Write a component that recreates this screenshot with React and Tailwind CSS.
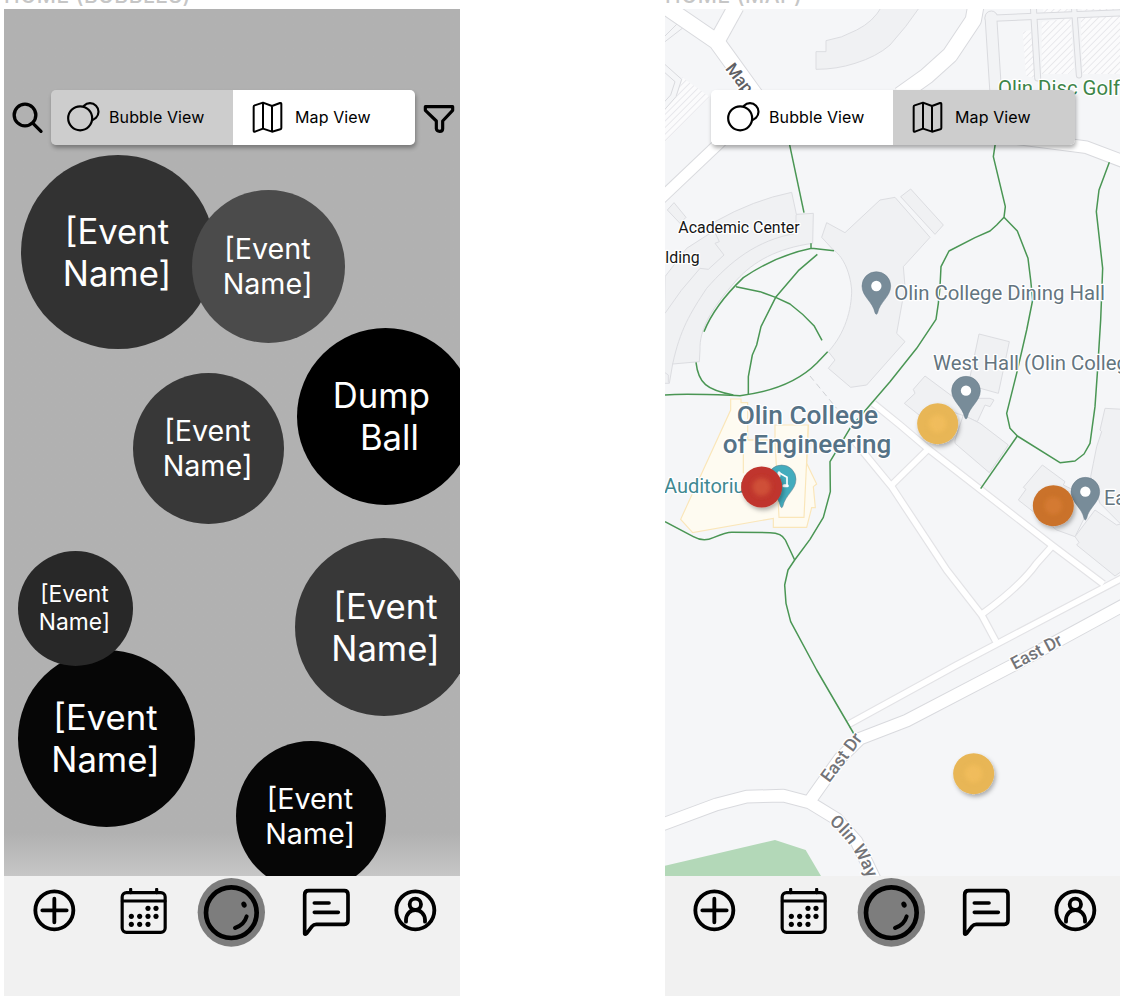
import React from "react";

function BubblesIcon({ fill }) {
  return (
    <svg className="h-8 w-[34px]" viewBox="199 305 102 96" fill="none" stroke="black" strokeWidth="6.5">
      <circle cx="271" cy="337" r="25.5" />
      <circle cx="241.5" cy="357" r="36" className={fill} />
    </svg>
  );
}

function FoldedMapIcon() {
  return (
    <svg className="h-8 w-[31px]" viewBox="757 304 93 96" fill="none" stroke="black" strokeWidth="6" strokeLinejoin="round">
      <path d="M762 321Q762 318 765 317L790 309L817 319L841 310Q845 309 845 313V385Q845 388 842 389L817 396L790 387L766 396Q762 397 762 393ZM790 309V387M817 319V396" />
    </svg>
  );
}

function Toggle({ active, className = "" }) {
  const bubble = active === "bubble";
  return (
    <div className={`flex h-[55px] w-[364px] rounded-[5px] shadow-[1px_3px_4px_rgba(0,0,0,0.32)] ${className}`}>
      <div className={`flex w-1/2 items-center rounded-l-[5px] pb-px pl-[15px] ${bubble ? "bg-[#cdcdcd]" : "bg-white"}`}>
        <BubblesIcon fill={bubble ? "fill-[#cdcdcd]" : "fill-white"} />
        <span className="ml-[9px] whitespace-nowrap text-[16px] tracking-[0.1px]">Bubble View</span>
      </div>
      <div className={`flex w-1/2 items-center rounded-r-[5px] pb-px pl-[19px] ${bubble ? "bg-white" : "bg-[#cdcdcd]"}`}>
        <FoldedMapIcon />
        <span className="ml-3 whitespace-nowrap text-[16px] tracking-[0.1px]">Map View</span>
      </div>
    </div>
  );
}

function NavBar({ className = "" }) {
  return (
    <nav className={`flex h-[120px] w-[456px] shrink-0 items-start bg-[#f1f1f1] ${className}`}>
      <svg className="ml-[29px] mt-[13px] h-[43px] w-[43px] shrink-0" viewBox="99 207 129 129" fill="none" stroke="black" strokeWidth="11.5" strokeLinecap="round">
        <circle cx="163" cy="271" r="57" />
        <path d="M127 271H200M163 236V307" />
      </svg>
      <svg className="ml-[44px] mt-[12px] h-[47px] w-[47px] shrink-0" viewBox="361 204 141 141" fill="none" stroke="black" strokeWidth="9.5" strokeLinecap="round">
        <rect x="367.5" y="218" width="129" height="119" rx="13" />
        <path d="M368 243H496M393 208V218M471 208V218" />
        <g fill="black" stroke="none">
          {[[445, 265], [469, 265], [395, 289], [420, 289], [445, 289], [469, 289], [395, 313], [420, 313], [445, 313]].map(([x, y]) => (
            <circle key={`${x}-${y}`} cx={x} cy={y} r="7.7" />
          ))}
        </g>
      </svg>
      <svg className="ml-[30px] mt-[2px] h-[69px] w-[68px] shrink-0" viewBox="592 174 204 207" fill="none">
        <ellipse cx="695" cy="277" rx="101" ry="103" fill="#7d7d7d" />
        <circle cx="695" cy="278" r="76" stroke="black" strokeWidth="14" />
        <ellipse cx="733" cy="254" rx="7.5" ry="9.5" fill="black" transform="rotate(-25 733 254)" />
        <path d="M741 289Q734 315 706 324" stroke="black" strokeWidth="12" strokeLinecap="round" />
      </svg>
      <svg className="ml-[37px] mt-[12px] h-[49px] w-[49px] shrink-0" viewBox="909 204 147 147" fill="none" stroke="black" strokeWidth="11" strokeLinecap="round" strokeLinejoin="round">
        <path d="M917 340V224Q917 212 929 212H1036Q1047 212 1047 224V301Q1047 313 1036 313H952Q944 313 939 319L923 340Q917 345 917 340Z" />
        <path d="M946 249H990M946 277H1018" />
      </svg>
      <svg className="ml-[43px] mt-[13px] h-[43px] w-[43px] shrink-0" viewBox="1181 206 129 129" fill="none" stroke="black" strokeWidth="11.5" strokeLinecap="round">
        <circle cx="1245" cy="270" r="57" />
        <circle cx="1245" cy="252" r="17" />
        <path d="M1217 304V298C1218 280 1230 269 1245 269S1273 280 1274 298V304" />
      </svg>
    </nav>
  );
}

const bubbles = [
  { pos: "left-[17px] top-[146px] size-[194px] bg-[#323232] text-[34.7px] leading-[42px]", lines: ["[Event", "Name]"] },
  { pos: "left-[188px] top-[181px] size-[153px] bg-[#4b4b4b] pb-px text-[28.7px] leading-[35px]", lines: ["[Event", "Name]"] },
  { pos: "left-[293px] top-[319px] size-[177px] bg-black pb-px text-[34.7px] leading-[42px]", lines: ["Dump\u2009", " Ball"] },
  { pos: "left-[129px] top-[364px] size-[151px] bg-[#383838] pb-px text-[28.7px] leading-[35px]", lines: ["[Event", "Name]"] },
  { pos: "left-[14px] top-[641px] size-[177px] bg-[#060606] pb-[2px] text-[34.7px] leading-[42px]", lines: ["[Event", "Name]"] },
  { pos: "left-[14px] top-[542px] size-[115px] bg-[#282828] pb-[2px] text-[22.8px] leading-[28px]", lines: ["[Event", "Name]"] },
  { pos: "left-[291px] top-[529px] size-[178px] bg-[#383838] pl-[5px] text-[34.7px] leading-[42px]", lines: ["[Event", "Name]"] },
  { pos: "left-[232px] top-[732px] size-[150px] bg-[#060606] pb-px text-[28.7px] leading-[35px]", lines: ["[Event", "Name]"] },
];

function BubbleCanvas() {
  return (
    <div className="absolute inset-0">
      {bubbles.map((b, i) => (
        <div key={i} className={`absolute flex flex-col items-center justify-center rounded-full pr-[2px] text-white ${b.pos}`}>
          {b.lines.map((line) => (
            <span key={line} className="whitespace-pre">{line}</span>
          ))}
        </div>
      ))}
    </div>
  );
}

function Pin({ x, y, color = "#788c99", hole = true }) {
  return (
    <g transform={`translate(${x} ${y})`}>
      <path d="M0 -43A43 43 0 0 1 43 0C43 32 10 48 4 80Q0 90 -4 80C-10 48 -43 32 -43 0A43 43 0 0 1 0 -43Z" fill={color} stroke="#667b88" strokeWidth="1.5" />
      {hole && <circle r="15.5" fill="white" />}
    </g>
  );
}

function Dot({ x, y, outer, inner }) {
  return (
    <g filter="url(#dotShadow)">
      <circle cx={x} cy={y} r="61.5" fill={outer} />
      <circle cx={x} cy={y} r="27" fill={inner} filter="url(#soft)" />
    </g>
  );
}

const roads = [
  ["M-20 -5L170 125L300 305", 46],
  ["M170 125L228 20", 46],
  ["M-20 617L190 418", 31],
  ["M948 15L940 60L870 165L800 228L720 285", 46],
  ["M1000 405L1280 442L1400 488", 35],
  ["M1410 1805L1060 1995L740 2162L600 2216L540 2275L450 2402", 35],
  ["M-10 2480L170 2413L260 2390L370 2387L450 2408L530 2457L590 2525L655 2660", 35],
];

const lanes = [
  "M640 1210L720 1275L805 1347L1175 1635L1330 1752",
  "M580 1320L695 1460L860 1710L965 1845L1008 1925",
  "M805 1347L695 1455",
  "M1175 1640L1130 1690Q1080 1760 965 1843",
  "M562 2175L890 1995L1010 1932L1400 1727",
];

const buildings = [
  "M665 20Q640 65 590 90Q545 115 498 122V155H468V208Q530 208 585 190Q650 170 690 135Q740 80 780 20Z",
  "M22 630L42 608L78 652L60 670Z",
  "M15 830L80 745L150 700L165 665Q280 600 395 577L410 647L408 700L200 805L38 1092L28 1150H10Z",
  "M38 1092C60 990 90 940 140 865C210 785 290 720 408 700V647L410 643L460 640L458 730C350 745 280 785 230 840C150 930 118 990 120 1050L118 1085Z",
  "M485 712L500 668L555 698L660 600L705 592L810 712L730 800L735 860L710 1000L735 1025L620 1155L572 1162L505 1105L525 1080L505 1055C555 1000 575 930 575 870C570 810 545 765 520 750Z",
  "M722 590L752 567L850 675L825 703Z",
  "M957 1002L1048 1025L1015 1180L925 1155Z",
  "M733 1210L765 1180L760 1168L795 1128L885 1195L990 1195L1002 1200L990 1220L975 1215L952 1265L905 1245L860 1230L815 1275Z",
  "M885 1320L910 1245L960 1270L1045 1335L988 1418L885 1330Z",
  "M1147 1395L1215 1445L1210 1455L1300 1500L1245 1610L1190 1590L1075 1500L1098 1468L1090 1462Z",
  "M1390 1228L1335 1225L1320 1290L1325 1295L1310 1340L1300 1390L1292 1430L1320 1510L1390 1580Z",
  "M1245 1610L1305 1530L1370 1575L1390 1570V1710L1365 1728L1250 1635L1257 1627Z",
];

const trails = [
  "M388 430L432 638",
  "M1006 430L1000 470L1036 620L1032 652L1010 675L990 693L945 713L867 753L843 800L840 860L835 910L828 958L770 1045L690 1145L570 1285L510 1385L511 1475L490 1552L450 1618L404 1680L384 1710L374 1755L378 1810L392 1865L470 2010L582 2202",
  "M1032 652L1072 693L1104 775L1112 840L1118 900L1100 990L1070 1120L1040 1240L1050 1285L1072 1308L1200 1388L1245 1383L1272 1362L1290 1330L1305 1220L1312 1120L1322 960L1328 805L1309 635L1317 570L1348 487",
  "M1072 1308L962 1466",
  "M15 1185C80 1180 180 1185 240 1187C340 1175 420 1140 470 1090L503 1055",
  "M108 1087C115 1150 140 1170 220 1185",
  "M132 995C150 950 180 900 250 833C320 785 380 760 455 745L522 752M453 730V745",
  "M472 763L415 812L347 892L303 980L290 1035L277 1065L265 1130V1185",
  "M228 860L300 875L347 892L390 912Q430 942 462 977L486 1021",
  "M15 1565L100 1610Q130 1627 160 1613Q200 1597 215 1597L330 1598Q365 1598 376 1620L404 1680",
];

function Label({ x, y, size, len, color, weight = 400, rotate = 0, children }) {
  return (
    <text
      transform={`translate(${x} ${y}) rotate(${rotate})`}
      fontSize={size}
      fontWeight={weight}
      fill={color}
      textLength={len}
      lengthAdjust="spacingAndGlyphs"
      stroke="white"
      strokeWidth="8"
      strokeLinejoin="round"
      paintOrder="stroke"
    >
      {children}
    </text>
  );
}

function CampusMap() {
  return (
    <svg className="absolute inset-0 h-full w-full font-['Roboto',sans-serif]" viewBox="15 27 1365 2601" preserveAspectRatio="none" fill="none">
      <defs>
        <pattern id="hatch" width="14" height="14" patternUnits="userSpaceOnUse" patternTransform="rotate(45)">
          <rect width="14" height="14" fill="#fbfbfc" />
          <path d="M0 0V14" stroke="#dfe0e4" strokeWidth="4" />
        </pattern>
        <filter id="dotShadow" x="-30%" y="-30%" width="160%" height="160%">
          <feDropShadow dx="5" dy="8" stdDeviation="6" floodOpacity="0.3" />
        </filter>
        <filter id="soft" x="-50%" y="-50%" width="200%" height="200%" colorInterpolationFilters="sRGB">
          <feGaussianBlur stdDeviation="6" />
        </filter>
        <path id="olinWay" d="M506 2468Q554 2508 584 2558Q609 2598 643 2688" />
      </defs>
      <rect x="15" y="27" width="1365" height="2601" fill="#f5f6f8" />
      <path d="M15 195L148 290L15 425Z" fill="url(#hatch)" />
      <path d="M0 160L68 235L50 290L0 345Z" fill="#f5f6f8" />
      <path d="M0 180L65 238L48 290L0 345M0 205L45 245L32 285L0 320M15 108L55 68M15 125L68 84" stroke="#d9dade" strokeWidth="3" />
      <path d="M1088 95L1112 90L1128 235L1098 228ZM1145 65L1232 55L1242 205L1225 222H1145ZM1262 55L1380 45V222H1268ZM1150 20H1225V35L1150 40ZM1265 20H1380V32H1265Z" fill="url(#hatch)" />
      <g strokeLinecap="round">
        <g stroke="#d9dade">
          <path d="M993 55L1010 320" strokeWidth="38" />
          <path d="M985 55L1400 38" strokeWidth="22" />
          <path d="M1120 20L1133 234" strokeWidth="21" />
          <path d="M1242 20L1257 226" strokeWidth="19" />
          <circle cx="994" cy="52" r="19" fill="#f2f3f5" strokeWidth="3" />
        </g>
        <g stroke="#f2f3f5">
          <path d="M993 55L1010 320" strokeWidth="32" />
          <path d="M985 55L1400 38" strokeWidth="16" />
          <path d="M1120 20L1133 234" strokeWidth="15" />
          <path d="M1242 20L1257 226" strokeWidth="13" />
        </g>
      </g>
      <g fill="#f0f1f3" stroke="#dcdde1" strokeWidth="3" strokeLinejoin="round">
        {buildings.map((d) => <path key={d} d={d} />)}
        <path d="M120 805L145 808L192 765L165 730L178 725L165 698M15 940Q60 870 120 805M15 1118L25 1125V1148" fill="none" />
      </g>
      <g fill="#fefbf1" stroke="#fae6b9" strokeWidth="3.5">
        <path d="M212 1197H243V1208H263V1320H345V1275H445L440 1390L470 1452L460 1460L466 1523H455L440 1582H340V1555L98 1598L62 1558L212 1230Z" />
        <path d="M250 1320L250 1420M345 1320L357 1552H432L445 1275M265 1320H345" fill="none" />
      </g>
      <g strokeLinejoin="round">
        {lanes.map((d) => <path key={d} d={d} stroke="#e3e3e6" strokeWidth="24" />)}
        {roads.map(([d, w]) => <path key={d} d={d} stroke="#d9dade" strokeWidth={w + 6} />)}
        {lanes.map((d) => <path key={d} d={d} stroke="white" strokeWidth="17" />)}
        {roads.map(([d, w]) => <path key={d} d={d} stroke="white" strokeWidth={w} />)}
      </g>
      <path d="M15 2597L345 2520L437 2550L490 2640H15Z" fill="#b3d8b8" />
      <path d="M450 1128L530 1225" stroke="#cfd1d5" strokeWidth="3" strokeDasharray="18 12" />
      <g stroke="#4a9654" strokeWidth="4.5" strokeLinejoin="round">
        {trails.map((d) => <path key={d} d={d} />)}
      </g>

      <Pin x={649} y={858} />
      <Pin x={918} y={1172} />
      <Pin x={1276} y={1475} />
      <Pin x={365} y={1438} color="#43acbd" hole={false} />
      <path d="M357 1418L381 1432V1458" stroke="white" strokeWidth="5" />
      <path d="M357 1418V1428M372 1457H382" stroke="white" strokeWidth="9" strokeLinecap="round" />

      <Label x={55} y={698} size={48} len={364} color="#151515">Academic Center</Label>
      <Label x={16} y={788} size={48} len={103} color="#151515">lding</Label>
      <Label x={703} y={900} size={62} len={632} color="#64757f">Olin College Dining Hall</Label>
      <Label x={819} y={1109} size={61} len={617} color="#64757f">West Hall (Olin College</Label>
      <Label x={1332} y={1515} size={60} color="#64757f">East Hall</Label>
      <Label x={1014} y={284} size={62} len={366} color="#3d8548">Olin Disc Golf</Label>
      <Label x={230} y={1273} size={79} len={424} weight={500} color="#557286">Olin College</Label>
      <Label x={188} y={1360} size={79} len={506} weight={500} color="#557286">of Engineering</Label>
      <Label x={12} y={1478} size={60} color="#3f8891">Auditorium</Label>
      <Label x={194} y={206} size={51} rotate={52} weight={500} color="#5f6064">Map</Label>
      <Label x={1064} y={2010} size={53} len={166} rotate={-28} weight={500} color="#737478">East Dr</Label>
      <Label x={508} y={2350} size={53} len={168} rotate={-53} weight={500} color="#737478">East Dr</Label>
      <text fontSize="53" fontWeight="500" fill="#737478" stroke="white" strokeWidth="8" strokeLinejoin="round" paintOrder="stroke">
        <textPath href="#olinWay">Olin Way</textPath>
      </text>

      <Dot x={833} y={1271} outer="#e8b656" inner="#f0bc5b" />
      <Dot x={1180} y={1517} outer="#ca722a" inner="#d47a32" />
      <Dot x={305} y={1461} outer="#c0362d" inner="#cf5038" />
      <Dot x={941} y={2321} outer="#e8b656" inner="#f0bc5b" />
    </svg>
  );
}

function FrameTitle({ children }) {
  return (
    <h2 className="flex h-[9px] items-end whitespace-nowrap pb-[3px] text-[21px] font-medium leading-[21px] tracking-[0.5px] text-[#c6c6c6]">
      {children}
    </h2>
  );
}

export default function App() {
  return (
    <main className="flex h-[1006px] w-[1128px] overflow-hidden bg-white pl-1 font-['Inter',sans-serif] text-black">
      <section className="w-[456px] shrink-0">
        <FrameTitle>HOME (BUBBLES)</FrameTitle>
        <div className="relative h-[867px] overflow-hidden bg-linear-to-b from-[#b1b1b1] from-95% to-[#c6c6c6]">
          <BubbleCanvas />
          <div className="relative flex items-center pt-[81px]">
            <svg className="ml-2 h-8 w-8" viewBox="35 307 96 96" fill="none" stroke="black" strokeWidth="10" strokeLinecap="round">
              <circle cx="74" cy="346" r="32.5" />
              <path d="M98 371L122 395" />
            </svg>
            <Toggle active="bubble" className="ml-[7px]" />
            <svg className="ml-2 h-8 w-8" viewBox="1268 306 96 96" fill="none" stroke="black" strokeWidth="9.5" strokeLinejoin="round">
              <path d="M1275 320H1357V331L1327 363V386Q1327 394 1318 394T1308 386V363L1275 331Z" />
            </svg>
          </div>
        </div>
        <NavBar />
      </section>
      <section className="ml-[205px] w-[455px] shrink-0 overflow-hidden">
        <FrameTitle>HOME (MAP)</FrameTitle>
        <div className="relative h-[867px] overflow-hidden">
          <CampusMap />
          <div className="relative pl-[46px] pt-[81px]">
            <Toggle active="map" />
          </div>
        </div>
        <NavBar className="-ml-px" />
      </section>
    </main>
  );
}
